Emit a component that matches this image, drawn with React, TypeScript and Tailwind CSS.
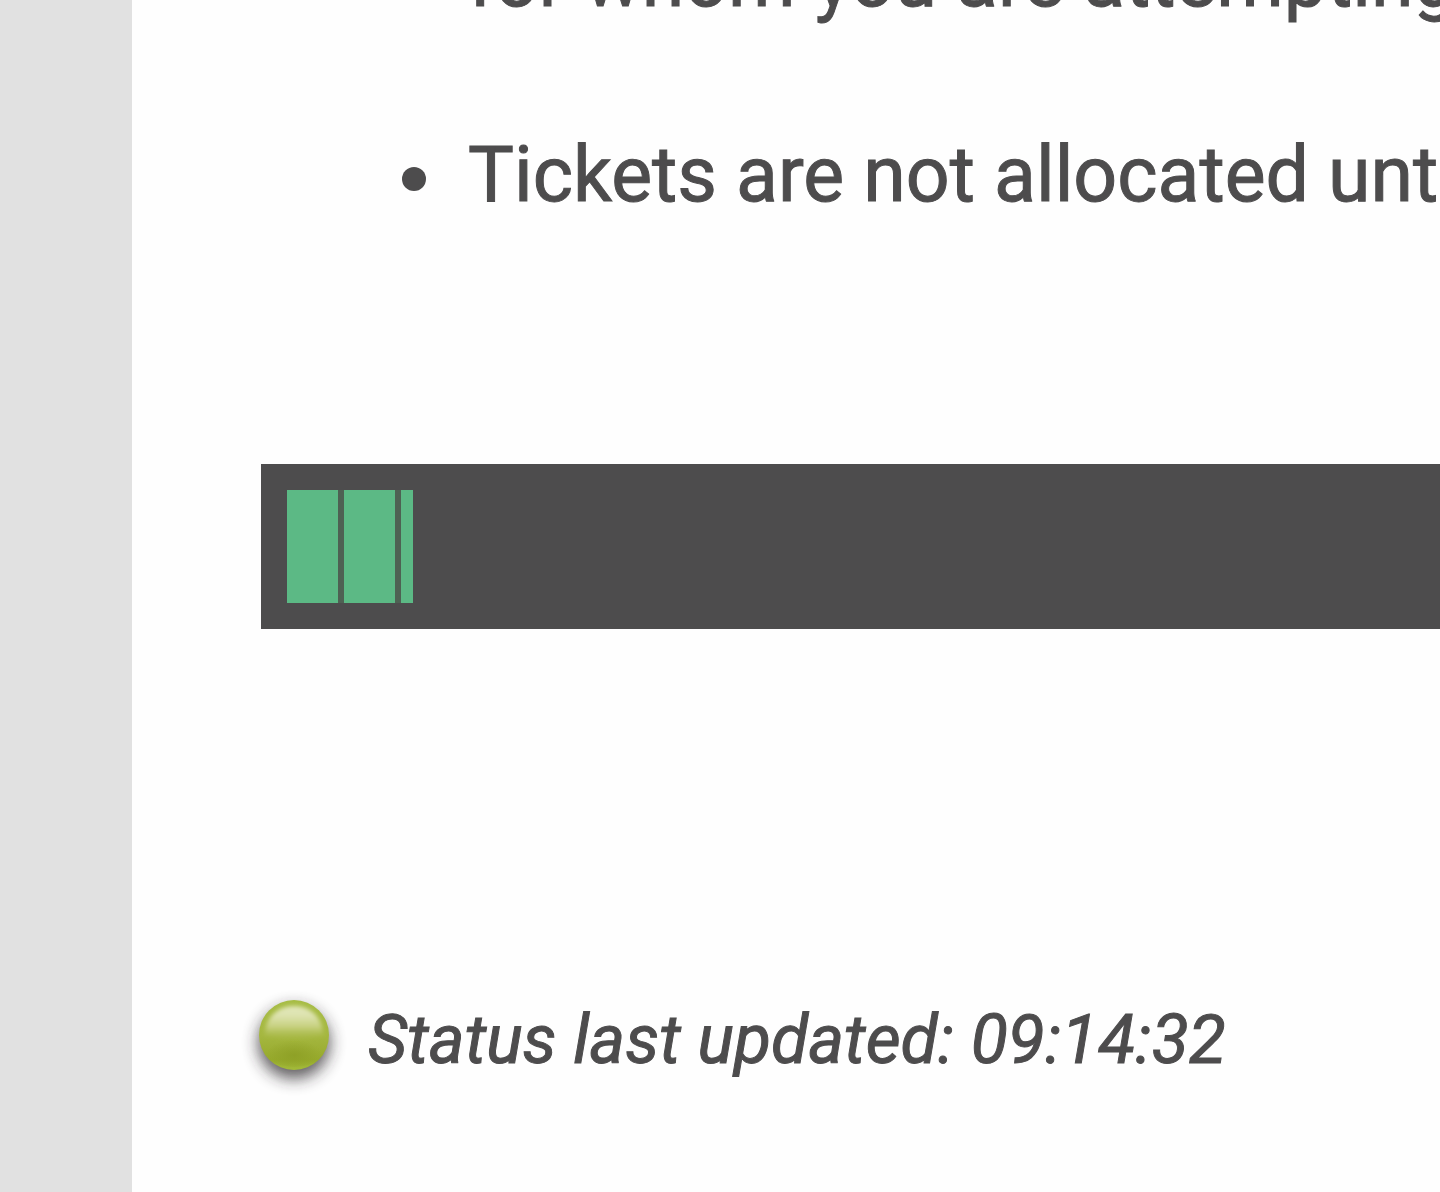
const segments = ["w-[51px]", "w-[51px]", "w-[12px]"];

function StatusLight() {
  return (
    <svg viewBox="0 0 130 140" className="-mt-6 -mb-11 -ml-[31px] h-[140px] w-[130px] shrink-0" role="img" aria-label="Online">
      <defs>
        <linearGradient id="body" x1="0" y1="0" x2="0" y2="1">
          <stop offset="0" stopColor="#a7bd45" />
          <stop offset="0.5" stopColor="#a5b740" />
          <stop offset="0.85" stopColor="#97aa2c" />
          <stop offset="1" stopColor="#a3bb3a" />
        </linearGradient>
        <linearGradient id="gloss" x1="0" y1="0" x2="0" y2="1">
          <stop offset="0" stopColor="#e2e7bb" />
          <stop offset="0.3" stopColor="#dde3af" />
          <stop offset="0.65" stopColor="#c6d07e" />
          <stop offset="1" stopColor="#a9b947" stopOpacity="0.3" />
        </linearGradient>
        <radialGradient id="base" cx="0.5" cy="0.6" r="0.5">
          <stop offset="0" stopColor="#8c9e24" stopOpacity="0.8" />
          <stop offset="1" stopColor="#8c9e24" stopOpacity="0" />
        </radialGradient>
        <filter id="shade" x="-50%" y="-50%" width="200%" height="200%">
          <feGaussianBlur stdDeviation="8" />
        </filter>
        <filter id="soft" x="-10%" y="-10%" width="120%" height="120%">
          <feGaussianBlur stdDeviation="2" />
        </filter>
      </defs>
      <circle cx="64" cy="63" r="36" fill="#2b2629" opacity="0.75" filter="url(#shade)" />
      <circle cx="64" cy="55" r="35" fill="url(#body)" />
      <ellipse cx="64" cy="72" rx="28" ry="15" fill="url(#base)" />
      <path d="M35 55C35 38 47 26 64 26S93 38 93 55Q64 62 35 55Z" fill="url(#gloss)" filter="url(#soft)" />
    </svg>
  );
}

export default function App() {
  return (
    <div className="flex h-screen overflow-hidden bg-[#e1e1e1] font-['Roboto',sans-serif] text-[#4d4c4d]">
      <main className="ml-[132px] min-w-0 grow overflow-hidden bg-[#fefefe] pl-[129px]">
        <ul className="-mt-[60px] list-none pl-[141px] text-[77px] leading-[80px] [-webkit-text-stroke:1px]">
          <li className="mb-[115px] ml-[66px] whitespace-nowrap">for whom you are attempting</li>
          <li className="flex items-center whitespace-nowrap">
            <span className="mr-[42px] mt-2 size-6 shrink-0 rounded-full bg-[#4d4c4d]" />
            Tickets are not allocated until
          </li>
        </ul>
        <div role="progressbar" aria-label="Queue progress" aria-valuenow={10} className="mt-[249px] flex h-[165px] bg-[#4d4c4d] p-[26px]">
          <div className="flex gap-[6px] bg-[#4e6153]">
            {segments.map((width, i) => (
              <span key={i} className={`${width} bg-[#5cb985]`} />
            ))}
          </div>
        </div>
        <div className="mt-[371px] flex items-center">
          <StatusLight />
          <p className="ml-2 whitespace-nowrap text-[68px] italic leading-[80px] [-webkit-text-stroke:1px]">Status last updated: 09:14:32</p>
        </div>
      </main>
    </div>
  );
}
